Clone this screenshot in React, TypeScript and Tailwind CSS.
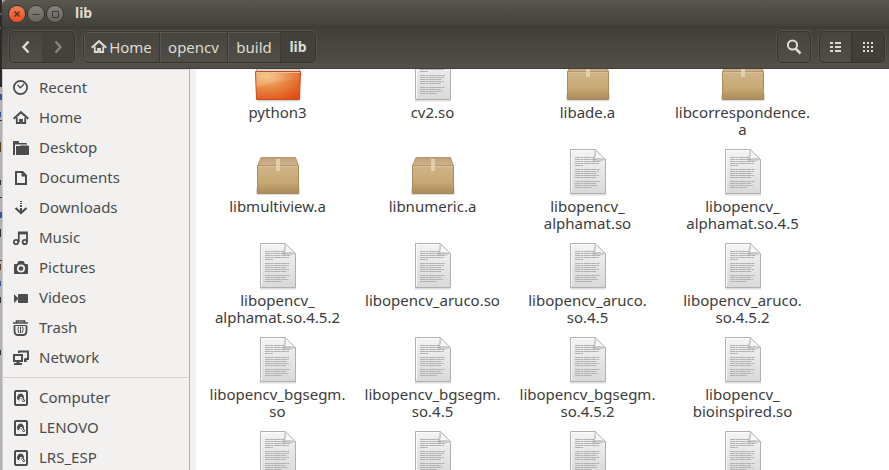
import React from "react";

type Kind = "folder" | "text" | "archive";

const files: { kind: Kind; lines: string[] }[] = [
  { kind: "folder", lines: ["python3"] },
  { kind: "text", lines: ["cv2.so"] },
  { kind: "archive", lines: ["libade.a"] },
  { kind: "archive", lines: ["libcorrespondence.", "a"] },
  { kind: "archive", lines: ["libmultiview.a"] },
  { kind: "archive", lines: ["libnumeric.a"] },
  { kind: "text", lines: ["libopencv_", "alphamat.so"] },
  { kind: "text", lines: ["libopencv_", "alphamat.so.4.5"] },
  { kind: "text", lines: ["libopencv_", "alphamat.so.4.5.2"] },
  { kind: "text", lines: ["libopencv_aruco.so"] },
  { kind: "text", lines: ["libopencv_aruco.", "so.4.5"] },
  { kind: "text", lines: ["libopencv_aruco.", "so.4.5.2"] },
  { kind: "text", lines: ["libopencv_bgsegm.", "so"] },
  { kind: "text", lines: ["libopencv_bgsegm.", "so.4.5"] },
  { kind: "text", lines: ["libopencv_bgsegm.", "so.4.5.2"] },
  { kind: "text", lines: ["libopencv_", "bioinspired.so"] },
  { kind: "text", lines: [] },
  { kind: "text", lines: [] },
  { kind: "text", lines: [] },
  { kind: "text", lines: [] },
];

const homeShape = (
  <g fill="none" stroke="currentColor">
    <path d="M0.7 8.800 8 2.200l7.300 6.600" strokeWidth="2" />
    <path d="M3.800 7.500V13H7v-3h2v3h3.200V7.500" strokeWidth="1.800" />
  </g>
);

const driveShape = (
  <>
    <rect x="2" y="1" width="12" height="14" rx="1" fill="none" stroke="currentColor" strokeWidth="2" />
    <path d="M8 3.600a4 4 0 0 0-3.400 6.200l1.800.8-.2-1.800 1.300-.5 1 1L10 12h2v-2l-1.200-1A4 4 0 0 0 8 3.600z" fill="currentColor" />
    <path d="M7 7.500h2v1.500l2.500 2.500" fill="none" stroke="#f2f1f0" strokeWidth="1" />
  </>
);

const places: { name: string; shape: React.ReactNode }[] = [
  {
    name: "Recent",
    shape: (
      <>
        <circle cx="7.500" cy="7.500" r="6.600" fill="none" stroke="currentColor" strokeWidth="1.800" />
        <path d="M4.500 5 7.500 7.800 11 4" fill="none" stroke="currentColor" strokeWidth="1.300" />
      </>
    ),
  },
  { name: "Home", shape: homeShape },
  {
    name: "Desktop",
    shape: (
      <>
        <path d="M0 15V2q0-1 1-1h4q1 0 1 1v1h7q1 0 1 1v.500H2V15z" fill="currentColor" />
        <path d="M3 6h4l1-.500h7q1 0 1 1V14q0 1-1 1H3z" fill="currentColor" />
      </>
    ),
  },
  {
    name: "Documents",
    shape: (
      <>
        <path d="M3 2h6.500L13 5.500V14H3z" fill="none" stroke="currentColor" strokeWidth="2" />
        <path d="M8.500 2v4.500H13z" fill="currentColor" />
      </>
    ),
  },
  {
    name: "Downloads",
    shape: (
      <>
        <path d="M7 1h2v1H7zM7 3h2v1H7zM7 5h2v2H7zM7 8h2v5H7z" fill="currentColor" />
        <path d="M2.500 8 8 13l5.500-5" fill="none" stroke="currentColor" strokeWidth="2.200" />
      </>
    ),
  },
  {
    name: "Music",
    shape: (
      <g fill="none" stroke="currentColor" strokeWidth="1.800">
        <circle cx="3" cy="12" r="2.200" />
        <circle cx="11.800" cy="12" r="2.200" />
        <path d="M5.800 12V2.500h8.200V12" />
        <path d="M6 3.500h8" />
      </g>
    ),
  },
  {
    name: "Pictures",
    shape: (
      <>
        <path
          d="M1 5q0-1 1-1h2l1-2q0-1 1-1h4q1 0 1 1l1 2h2q1 0 1 1v8q0 1-1 1H2q-1 0-1-1z"
          fill="currentColor"
        />
        <circle cx="8" cy="8.500" r="3.200" fill="none" stroke="#f2f1f0" strokeWidth="1.700" />
      </>
    ),
  },
  {
    name: "Videos",
    shape: <path d="M6 4h8q1 0 1 1v7q0 1-1 1H6q-1 0-1-1V9l-3.500 3.500H1v-8h.500L5 8V5q0-1 1-1z" fill="currentColor" />,
  },
  {
    name: "Trash",
    shape: (
      <g fill="none" stroke="currentColor">
        <path d="M0 3h15M3.500 2.500V1h8v1.500" strokeWidth="1.600" />
        <path d="M1.500 5.500h12" strokeWidth="1" />
        <path d="M1.500 5.500V10q0 5 3 5h6q3 0 3-5V5.500" strokeWidth="1.800" />
        <path d="M5.500 6.500q-1.500 3 .5 6.500M9.500 6.500q1.500 3-.5 6.500M7.500 6.500V13" strokeWidth="1" />
      </g>
    ),
  },
  {
    name: "Network",
    shape: (
      <>
        <path d="M6 3V1.500h9V9h-3.500" fill="none" stroke="currentColor" strokeWidth="1.900" />
        <path d="M1 5h8v6H1z" fill="none" stroke="currentColor" strokeWidth="2" />
        <path d="M3.500 11h3v2H9v2H1v-2h2.500zM11 9h2l1 3h-3z" fill="currentColor" />
      </>
    ),
  },
];

const devices = ["Computer", "LENOVO", "LRS_ESP"];

function Glyph({ children }: { children: React.ReactNode }) {
  return (
    <svg viewBox="0 0 16 16" className="size-4 shrink-0" aria-hidden="true">
      {children}
    </svg>
  );
}

function Place({ name, shape }: { name: string; shape: React.ReactNode }) {
  return (
    <li>
      <button type="button" className="flex h-[30px] w-full items-center gap-[10px] pl-[10px] text-left leading-5">
        <Glyph>{shape}</Glyph>
        <span className="pb-[2px]">{name}</span>
      </button>
    </li>
  );
}

const textRows = [
  [9, 19], [11, 21], [13, 25], [15, 24], [17, 8],
  [21, 25], [23, 24], [25, 22], [27, 24], [29, 21],
  [33, 25], [35, 21], [37, 23], [39, 17],
];

function FileIcon({ kind }: { kind: Kind }) {
  return (
    <svg viewBox="0 0 48 48" className="size-12" aria-hidden="true">
      {kind === "text" && (
        <>
          <path d="M6 46.500h36" stroke="#000" strokeOpacity=".13" strokeWidth="2" />
          <path d="M6.500 1.500H31L41.500 11.500V45.500H6.500z" fill="url(#paper)" stroke="#b0b0b0" />
          <path d="M7.500 44.500V2.500H31" fill="none" stroke="#fff" strokeOpacity=".8" />
          {textRows.map(([y, w]) => (
            <path
              key={y}
              d={`M11 ${y + 0.5}h${w}`}
              stroke="#b2b2b2"
              strokeDasharray="5 .4 3 .4 7 .4"
            />
          ))}
          <path d="M28.500 13 31 2l10.500 9.500-4 2z" fill="#888" fillOpacity=".3" />
          <path d="M31 1.500q1.200 5-.5 9.500 4-1 11 .5z" fill="url(#fold)" stroke="#b5b5b5" strokeWidth=".8" />
        </>
      )}
      {kind === "archive" && (
        <>
          <rect x="2" y="39" width="44" height="8" rx="2" fill="#000" fillOpacity=".14" />
          <path d="M7 9.500h34.500l3 8.500H3.500z" fill="url(#lid)" stroke="#b5946c" />
          <path d="M3.500 18h41v27.500h-41z" fill="url(#carton)" stroke="#a98a5c" />
          <path d="M4 18.500h40" stroke="#dcc299" />
          <path d="M22 11h4v12h-4z" fill="#e7d6b7" fillOpacity=".8" />
        </>
      )}
      {kind === "folder" && (
        <>
          <path d="M3 46.500h43" stroke="#000" strokeOpacity=".16" strokeWidth="2" />
          <path d="M2.500 10.500h43v10h-43z" fill="#d3d3d3" stroke="#aaa" />
          <path d="M1.500 17.500h45l-1 28h-43z" fill="url(#orange)" stroke="#ca4c1c" />
          <path d="M2 18h44l-.4 7Q24 27 2.400 33z" fill="url(#shine)" />
          <path d="M2 18.500h44" stroke="#f5c18d" />
        </>
      )}
    </svg>
  );
}

function Gradients() {
  return (
    <svg className="absolute size-0" aria-hidden="true">
      <defs>
        <linearGradient id="paper" x1="0" y1="0" x2="0" y2="1">
          <stop offset="0" stopColor="#f4f4f4" />
          <stop offset="1" stopColor="#d9d9d9" />
        </linearGradient>
        <linearGradient id="fold" x1="0" y1="1" x2="1" y2="0">
          <stop offset="0" stopColor="#fff" />
          <stop offset=".5" stopColor="#f4f4f4" />
          <stop offset="1" stopColor="#c4c4c4" />
        </linearGradient>
        <linearGradient id="lid" x1="0" y1="0" x2="0" y2="1">
          <stop offset="0" stopColor="#c2a27c" />
          <stop offset="1" stopColor="#d0b18b" />
        </linearGradient>
        <linearGradient id="carton" x1="0" y1="0" x2="0" y2="1">
          <stop offset="0" stopColor="#cfb488" />
          <stop offset=".6" stopColor="#c6a873" />
          <stop offset="1" stopColor="#ab8b59" />
        </linearGradient>
        <radialGradient id="orange" cx=".25" cy=".15" r="1">
          <stop offset="0" stopColor="#f3bd7c" />
          <stop offset=".45" stopColor="#e78a45" />
          <stop offset="1" stopColor="#e34a14" />
        </radialGradient>
        <linearGradient id="shine" x1="0" y1="0" x2="1" y2="0">
          <stop offset="0" stopColor="#fff" stopOpacity=".15" />
          <stop offset=".5" stopColor="#fff" stopOpacity=".15" />
          <stop offset="1" stopColor="#fff" stopOpacity=".03" />
        </linearGradient>
      </defs>
    </svg>
  );
}

const group =
  "flex h-8 overflow-hidden rounded-[5px] border border-[#35342f] bg-linear-to-b from-[#45443e] to-[#504e47] shadow-[0_0_0_1px_#55534b]";
const pathButton =
  "flex h-full items-center justify-center border-r border-[#393832] shadow-[inset_1px_1px_0_#5a5850]";

export default function App() {
  return (
    <div className="flex h-screen overflow-hidden bg-[#b4b2b5] font-['Noto_Sans','Open_Sans',sans-serif] text-[15px] text-[#4c4c4c]">
      <Gradients />
      <svg width="2" height="470" className="shrink-0" aria-hidden="true">
        <rect width="2" height="87" fill="#2c2a2b" />
        <path d="M0 14h2M0 28h1" stroke="#6f8eaa" />
        <path d="M0 94h2v6H0zM0 112h1v5H0zM0 212h2v6H0zM0 281h1v5H0z" fill="#3157a5" />
        <path d="M0 142h1v10H0zM0 260h2v1H0zM0 264h1v6H0z" fill="#594021" />
        <path d="M0 120h2v1H0zM0 180h1v5H0zM0 197h2v1H0zM0 229h1v8H0zM0 297h1v6H0zM0 350h1v5H0z" fill="#30343c" />
      </svg>
      <div className="flex min-w-0 flex-1 flex-col">
        <header className="shrink-0 text-[#dfdbd2]">
          <div className="flex h-[27px] items-center rounded-tl-[5px] bg-linear-to-b from-[#5a574f] to-[#403f3a] pl-[7px]">
            <div className="flex gap-[3px]">
              <button type="button" aria-label="Close" className="flex size-4 items-center justify-center rounded-full bg-linear-to-b from-[#f37c55] to-[#e6501f] text-[#5b2a18] ring-1 ring-[#35332e]">
                <svg viewBox="0 0 16 16" className="size-4"><path d="m5.500 5.500 5 5m0-5-5 5" stroke="currentColor" strokeWidth="1.400" /></svg>
              </button>
              <button type="button" aria-label="Minimize" className="flex size-4 items-center justify-center rounded-full bg-linear-to-b from-[#85827b] to-[#66645e] text-[#3c3b37] ring-1 ring-[#35332e]">
                <svg viewBox="0 0 16 16" className="size-4"><path d="M4.500 8.500h7" stroke="currentColor" /></svg>
              </button>
              <button type="button" aria-label="Maximize" className="flex size-4 items-center justify-center rounded-full bg-linear-to-b from-[#85827b] to-[#66645e] text-[#3c3b37] ring-1 ring-[#35332e]">
                <svg viewBox="0 0 16 16" className="size-4"><path d="M5.500 5.500h6v6h-6z" fill="none" stroke="currentColor" /></svg>
              </button>
            </div>
            <h1 className="pb-[2px] pl-3 text-[14px] leading-5 font-bold">lib</h1>
          </div>
          <div className="flex h-[42px] items-start gap-2 border-t border-b border-t-[#383732] border-b-[#403e38] bg-linear-to-b from-[#403f3a] to-[#524f48] pt-[3px] pr-1 pl-[7px]">
            <div className={group}>
              <button type="button" aria-label="Back" className="flex w-8 items-center justify-center">
                <svg viewBox="0 0 16 16" className="size-4"><path d="M10.500 2.500 5.500 8l5 5.500" fill="none" stroke="currentColor" strokeWidth="2.400" /></svg>
              </button>
              <button type="button" aria-label="Forward" className="flex w-8 items-center justify-center bg-[#43423c] text-[#8b8880]">
                <svg viewBox="0 0 16 16" className="size-4"><path d="m5.500 2.500 5 5.500-5 5.500" fill="none" stroke="currentColor" strokeWidth="2.200" /></svg>
              </button>
            </div>
            <nav aria-label="Path" className={`${group} leading-5`}>
              <button type="button" className={`${pathButton} w-[76px]`}>
                <Glyph>{homeShape}</Glyph>
                <span className="pl-[2px]">Home</span>
              </button>
              <button type="button" className={`${pathButton} w-[68px]`}>opencv</button>
              <button type="button" className={`${pathButton} w-[53px]`}>build</button>
              <button type="button" className="flex w-[34px] items-center justify-center bg-[#43413b] text-[14px] leading-5 font-bold">lib</button>
            </nav>
            <div className={`${group} ml-auto`}>
              <button type="button" aria-label="Search" className="flex w-8 items-center justify-center">
                <svg viewBox="0 0 16 16" className="size-4">
                  <circle cx="6.500" cy="6" r="4.600" fill="none" stroke="currentColor" strokeWidth="2" />
                  <path d="m9.500 9.500 5 5" stroke="currentColor" strokeWidth="2.500" />
                </svg>
              </button>
            </div>
            <div className={group}>
              <button type="button" aria-label="List view" className="flex w-8 items-center justify-center border-r border-[#35342f]">
                <svg viewBox="0 0 16 16" className="size-4" fill="currentColor" shapeRendering="crispEdges">
                  <path d="M2 3h3v2H2zM2 7h3v2H2zM2 11h3v2H2zM7 3h6v2H7zM7 7h6v2H7zM7 11h6v2H7z" />
                </svg>
              </button>
              <button type="button" aria-label="Grid view" className="flex w-8 items-center justify-center bg-[#403f39]">
                <svg viewBox="0 0 16 16" className="size-4" fill="currentColor" shapeRendering="crispEdges">
                  <path d="M3 3h2v2H3zM7 3h2v2H7zM11 3h2v2h-2zM3 7h2v2H3zM7 7h2v2H7zM11 7h2v2h-2zM3 11h2v2H3zM7 11h2v2H7zM11 11h2v2h-2z" />
                </svg>
              </button>
            </div>
          </div>
        </header>
        <div className="flex min-h-0 flex-1">
          <aside className="w-[188px] shrink-0 overflow-hidden border-t border-r border-l border-t-[#d8d6d3] border-r-[#b3b1ae] border-l-[#cfcdcb] bg-[#f2f1f0] pt-[3px]">
            <ul>
              {places.map((place) => (
                <Place key={place.name} {...place} />
              ))}
            </ul>
            <hr className="mt-1 mb-[5px] border-[#d5d3d1]" />
            <ul>
              {devices.map((name) => (
                <Place key={name} name={name} shape={driveShape} />
              ))}
            </ul>
          </aside>
          <main className="min-w-0 flex-1 overflow-hidden border-l-6 border-[#f2f1f0] bg-white pl-1 text-[#3c3c3c]">
            <ul className="-mt-[15px] grid auto-rows-[94px] grid-cols-[repeat(auto-fill,155px)]">
              {files.map((file, i) => (
                <li key={i} className="flex flex-col items-center gap-[2px] text-center leading-[17px]">
                  <FileIcon kind={file.kind} />
                  <p className="whitespace-pre-line">{file.lines.join("\n")}</p>
                </li>
              ))}
            </ul>
          </main>
        </div>
      </div>
    </div>
  );
}
